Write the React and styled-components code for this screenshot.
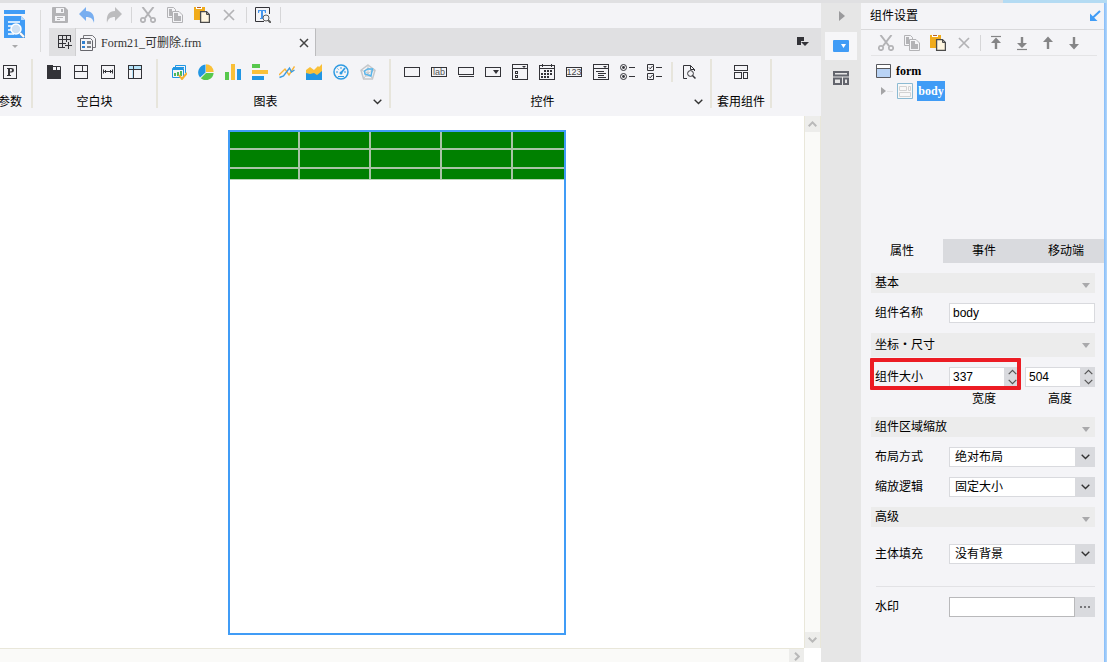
import React, { useState } from 'react';
import styled, { createGlobalStyle, css } from 'styled-components';

const Global = createGlobalStyle`
  *, *::before, *::after { box-sizing: border-box; }
  html, body, #root { height: 100%; }
  body {
    margin: 0;
    overflow: hidden;
    background: #f4f4f7;
    color: #000;
    font: 12px/20px "Liberation Sans", "Noto Sans CJK SC", sans-serif;
  }
  button, input, select { font: inherit; color: inherit; margin: 0; padding: 0; border: 0; border-radius: 0; background: none; outline: none; }
  svg { display: block; flex: none; }
`;

/* ---------- layout ---------- */
const Window = styled.div`display: flex; flex-direction: column; min-height: 100vh;`;
const TopEdge = styled.div`
  height: 3px;
  flex: none;
  display: flex;
  justify-content: flex-end;
  background: #e0e0e2;
  &::after { content: ''; width: 104px; background: #b4dbf3; }
`;
const Columns = styled.div`flex: 1; display: flex; min-height: 0;`;
const Workspace = styled.main`flex: 1; min-width: 0; display: flex; flex-direction: column;`;
const Header = styled.header`height: 53px; flex: none; display: flex;`;
const Brand = styled.button`
  width: 47px;
  display: flex;
  padding: 7px 0 0 4px;
  align-items: flex-start;
`;
const BrandLine = styled.span`width: 1px; height: 42px; margin: 0 0 0 15px; background: #dcdcdc;`;
const HeaderMain = styled.div`flex: 1; min-width: 0; display: flex; flex-direction: column;`;
const QuickBar = styled.div`height: 25px; display: flex; align-items: flex-start; padding-top: 4px;`;
const TabBar = styled.div`height: 28px; margin-left: 2px; display: flex; background: #e0e0e2;`;
const NewTab = styled.button`width: 27px; padding-left: 8px; display: flex; align-items: center; border-right: 1px solid #cfcfd1;`;
const FileTab = styled.div`
  width: 240px;
  display: flex;
  align-items: center;
  gap: 5px;
  padding: 0 6px 0 4px;
  background: #f4f4f7;
  border-top: 1px solid #dedee0;
  border-right: 1px solid #bcbcbe;
`;
const FileName = styled.span`
  flex: 1;
  color: #333;
  font-family: "Liberation Serif", "Noto Sans CJK SC", serif;
`;
const TabMenu = styled.button`margin-left: auto; width: 24px; display: flex; align-items: center;`;

const IconButton = styled.button`
  width: ${p => p.$w || 27}px;
  height: 16px;
  padding-left: 5px;
  flex: none;
`;
const Divider = styled.span`
  width: ${p => p.$w || 7}px;
  height: ${p => p.$h || 16}px;
  flex: none;
  display: flex;
  justify-content: center;
  &::before { content: ''; width: ${p => p.$line || 1}px; background: ${p => p.$color || '#d6d6d8'}; }
`;

const Ribbon = styled.div`height: 60px; flex: none; display: flex; padding: 3px 0 8px;`;
const Group = styled.section`
  width: ${p => p.$w}px;
  flex: none;
  display: flex;
  flex-direction: column;
  align-items: center;
  gap: 11px;
  padding: 5px ${p => p.$right || 0}px 0 0;
  border-right: 2px solid #e7e5dc;
`;
const GroupIcons = styled.div`display: flex; align-items: center; height: 16px;`;
const GroupLabel = styled.div`
  height: 22px;
  line-height: 22px;
  align-self: ${p => (p.$menu ? 'stretch' : 'center')};
  display: flex;
  align-items: center;
  white-space: nowrap;
  span { flex: 1; text-align: center; }
  button { width: 16px; flex: none; }
`;

/* ---------- canvas ---------- */
const Viewport = styled.div`
  flex: 1;
  min-height: 0;
  display: grid;
  grid-template-columns: 1fr 17px;
  grid-template-rows: 1fr 14px;
  background: #fff;
`;
const Canvas = styled.div`display: flex; justify-content: center; align-items: flex-start; padding: 14px 10px 0 0;`;
const FormFrame = styled.div`width: 338px; height: 505px; border: 2px solid #409cf6;`;
const Report = styled.table`
  width: 100%;
  table-layout: fixed;
  border-spacing: 0;
  border-bottom: 1px solid #b8d4b4;
  td { padding: 0; background: #008000; border: 0 solid #a9c4a6; border-width: 0 2px 2px 0; }
  td:last-child { border-right: 0; }
  tr:last-child td { border-bottom: 0; }
`;
const ReportRow = styled.tr`height: ${p => p.$h}px;`;
const Scroll = styled.div`
  display: flex;
  flex-direction: ${p => (p.$vertical ? 'column' : 'row')};
  justify-content: ${p => (p.$vertical ? 'space-between' : 'flex-end')};
  background: #fafaf8;
  border: 0 solid #e9e7da;
  border-width: ${p => (p.$vertical ? '0 1px' : '1px 0 0')};
  button {
    width: 15px;
    height: ${p => (p.$vertical ? 16 : 14)}px;
    background: #ededeb;
    display: flex;
    align-items: center;
    justify-content: center;
  }
`;

/* ---------- side strip ---------- */
const SideStrip = styled.nav`
  width: 40px;
  flex: none;
  display: flex;
  flex-direction: column;
  align-items: center;
  background: #e6e6e6;
`;
const StripButton = styled.button`
  width: 32px;
  height: ${p => p.$h}px;
  display: flex;
  align-items: center;
  justify-content: center;
  background: ${p => (p.$active ? '#f6f6f8' : 'transparent')};
`;

/* ---------- settings panel ---------- */
const Panel = styled.aside`
  width: 246px;
  flex: none;
  position: relative;
  display: flex;
  flex-direction: column;
  &::after {
    content: '';
    position: absolute;
    inset: 0 0 0 auto;
    width: 3px;
    background: linear-gradient(90deg, #85bcf8, #b4d7fb);
  }
`;
const PanelTitle = styled.h2`
  margin: 0;
  height: 27px;
  padding: 0 6px 0 9px;
  display: flex;
  align-items: center;
  justify-content: space-between;
  font-size: 12px;
  font-weight: 400;
  border-bottom: 1px solid #d9d9db;
`;
const PanelTools = styled.div`
  height: 26px;
  margin: 0 10px;
  padding-left: 2px;
  display: flex;
  align-items: center;
  border-bottom: 1px solid #e4e4e6;
`;
const Tree = styled.ul`height: 183px; margin: 0; padding: 5px 0 0; list-style: none;`;
const TreeItem = styled.li`
  height: 20px;
  display: flex;
  align-items: center;
  gap: 4px;
  padding-left: ${p => p.$indent}px;
  font: bold 12px/20px "Liberation Serif", serif;
`;
const Selected = styled.span`width: 28px; text-align: center; color: #fff; background: #409cf6;`;
const Tabs = styled.div`height: 24px; display: grid; grid-template-columns: repeat(3, 1fr); flex: none;`;
const Tab = styled.button`background: ${p => (p.$active ? '#f4f4f7' : '#d9dade')};`;
const Properties = styled.form`
  padding: 10px 12px 0 10px;
  display: flex;
  flex-direction: column;
  gap: 10px;
`;
const SectionHead = styled.button`
  height: ${p => p.$h || 20}px;
  padding: 0 5px 0 4px;
  display: flex;
  align-items: center;
  justify-content: space-between;
  background: #ececec;
  svg { margin-top: ${p => (p.$h ? 0 : 4)}px; }
`;
const Row = styled.div`
  height: 20px;
  display: flex;
  align-items: center;
  padding-left: 4px;
  margin-top: ${p => p.$top || 0}px;
`;
const Label = styled.label`width: 74px; flex: none;`;
const boxed = css`
  height: 20px;
  min-width: 0;
  flex: 1;
  background: #fff;
  border: 1px solid ${p => p.$line || '#d9dade'};
`;
const TextBox = styled.input`${boxed} padding-left: 3px;`;
const SelectBox = styled.div`
  flex: 1;
  display: grid;
  grid-template-columns: 1fr 20px;
  align-items: center;
  select { grid-area: 1 / 1 / 2 / 3; ${boxed} appearance: none; padding: 0 24px 0 5px; border-right: 20px solid #d9dade; line-height: 18px; }
  svg { grid-area: 1 / 2; justify-self: center; pointer-events: none; }
`;
const SizeRow = styled(Row)`position: relative;`;
const Highlight = styled.span`
  position: absolute;
  inset: -9px 74px -3px -1px;
  border: 4px solid #ec1c24;
  border-radius: 1px;
  pointer-events: none;
`;
const SizeFields = styled.div`flex: 1; display: grid; grid-template-columns: 1fr 1fr; gap: 6px;`;
const Stepper = styled.div`display: flex; height: 20px; min-width: 0;`;
const Arrows = styled.div`
  width: 14px;
  flex: none;
  display: flex;
  flex-direction: column;
  background: #d9dade;
  button { height: 10px; display: flex; align-items: center; justify-content: center; }
`;
const Captions = styled.div`
  height: 20px;
  margin-top: -10px;
  padding-left: 78px;
  display: grid;
  grid-template-columns: 1fr 1fr;
  gap: 6px;
  line-height: 24px;
  span { text-align: center; }
`;
const Rule = styled.hr`width: 219px; margin: 12px 0 0 auto; border: 0; border-top: 1px solid #e2e2e5;`;
const MoreButton = styled.button`
  width: 20px;
  height: 20px;
  display: flex;
  align-items: center;
  justify-content: center;
  background: #d9dade;
`;

/* ---------- icons ---------- */
const S = ({ w = 16, h = 16, children, ...r }) => (
  <svg width={w} height={h} viewBox={`0 0 ${w} ${h}`} fill="none" aria-hidden="true" {...r}>{children}</svg>
);
const D = '#333338';
const G = '#b3b3b6';
const Line = ({ children }) => <S><g stroke={D} strokeWidth="1" shapeRendering="crispEdges">{children}</g></S>;
const Chevron = ({ c = '#333', dir = 0, w = 9, sw = 1.4 }) => (
  <svg width={w} height="6" viewBox="0 0 9 6" fill="none" aria-hidden="true">
    <path d="M.7 .8 4.5 4.6 8.3 .8" stroke={c} strokeWidth={sw} transform={`rotate(${dir} 4.5 3)`} />
  </svg>
);
const Caret = ({ c = '#a9a9ab' }) => <S w={8} h={5}><path d="M0 0h8L4 5z" fill={c} /></S>;

const icons = {
  save: <S><path d="M0 1q0-1 1-1h12l3 3v12q0 1-1 1H1q-1 0-1-1z" fill={G} /><path d="M4 1h8v5H4zM3 9h10v5H3z" fill="#f4f4f7" /><path d="M9 2h2v3H9zM5 10h6v1H5zM5 12h3v1H5z" fill={G} /></S>,
  undo: <S><path d="M7 0v4c6 0 9 4 8 12-1-4-3-6-8-6v4L0 7z" fill="#78aef0" /></S>,
  redo: <S><path d="M9 0v4C3 4 0 8 1 16c1-4 3-6 8-6v4l7-7z" fill="#bcbcbe" /></S>,
  cut: <S><path d="M2.500 0 11 11M13.500 0 5 11" stroke={G} strokeWidth="2" /><circle cx="3" cy="13" r="2.200" stroke={G} strokeWidth="1.700" /><circle cx="13" cy="13" r="2.200" stroke={G} strokeWidth="1.700" /></S>,
  copy: <S><path d="M.5.5h6l2 2v8h-8z" stroke={G} /><path d="M2 2h3v3h2v4H2z" fill={G} /><path d="M5.500 4.500h6.500l3.500 3.500v7.500h-10z" fill="#f4f4f7" stroke={G} /><path d="M7 6h4v3h3v5H7z" fill={G} /></S>,
  paste: <S><path d="M0 0h11v13H0z" fill="#f0ab1b" /><path d="M2 0h6v2H2z" fill="#fff" /><path d="M3 0h4v1H3z" fill="#b5622c" /><path d="M6.600 4.600h5.900l2.900 2.900v7.900H6.600z" fill="#fff6e0" stroke="#4b4b4b" strokeWidth="1.300" /><path d="M12.500 4.500v3h3" stroke="#4b4b4b" /></S>,
  close: <S><path d="m3 3 10 10M13 3 3 13" stroke={G} strokeWidth="1.700" /></S>,
  find: <S><path d="M9 14.500H.5V.5h14V7" stroke={D} /><path d="M3 3h8v3h-1L9.500 4H8v7h1v1H5v-1h1V4H4.500L4 6H3z" fill="#4797ee" /><circle cx="11" cy="11" r="3" stroke="#606060" fill="#f4f4f7" /><path d="m13 13 3 3" stroke="#606060" strokeWidth="2" /></S>,
  param: <S><rect x="1.500" y="1.500" width="13" height="13" stroke={D} /><path d="M5 4h4.500q2.500 0 2.500 2.200T9.500 8.600H8V11h1v1H5v-1h1V5H5zM8 5v2.600h.8Q10 7.500 10 6.300T8.800 5z" fill={D} /></S>,
  block1: <S><path d="M1 1h6v5h8v9H1z" fill={D} /><path d="M7 2.500h7.500v3.500M10.500 2.500V6" stroke={D} /></S>,
  block2: <Line><path d="M1.500 1.500h13v13h-13zM1.500 7.500h13M9.500 1.500v6" /></Line>,
  block3: <S><rect x="1.500" y="1.500" width="13" height="13" stroke={D} /><path d="M3.500 5.500v4M12.500 5.500v4M4 7.500h8M6 6 4.500 7.500 6 9M10 6l1.500 1.500L10 9" stroke={D} /></S>,
  block4: <S><path d="M2 2h12v3H6v9H5V5H2z" fill="#b7e4fa" /><path d="M1.500 1.500h13v13h-13zM1.500 5.500h13M6.500 1.500v13" stroke={D} shapeRendering="crispEdges" /></S>,
  report: <S><path d="M4.500 3.500v-2h10V9M2 3.500h11" stroke="#2196e3" /><path d="M1.500 4.500h11v9h-11zM1 5.500h12" stroke="#2196e3" fill="#f4f4f7" /><path d="M3 9h2v3H3zM6 8h2v4H6zM9 7h2v5H9z" fill="#4bb85b" /><path d="m8 11 3 4 5-6" stroke="#f7b12c" strokeWidth="2" /></S>,
  pie: <S><path d="M7.500 8.500V.5a8 8 0 0 0-5.500 13z" fill="#2196e3" /><path d="M8 8V.3A7.700 7.700 0 0 1 15.700 8z" fill="#f9c038" /><path d="M8 9h7.600A7.700 7.700 0 0 1 2.800 14.200z" fill="#57c84d" /></S>,
  column: <S><path d="M0 8h4v8H0z" fill="#57c84d" /><path d="M6 0h4v16H6z" fill="#f9c038" /><path d="M12 5h4v11h-4z" fill="#2196e3" /></S>,
  bar: <S><path d="M0 0h8v4H0z" fill="#57c84d" /><path d="M0 6h16v4H0z" fill="#f9c038" /><path d="M0 12h12v4H0z" fill="#2196e3" /></S>,
  line: <S><path d="m0 11 6-6 4 6 5.500-8.500" stroke="#f9b53a" strokeWidth="1.400" /><path d="m.5 13.500 4-1.500L10.500 4l2 4L15.500 6" stroke="#3c9be0" strokeWidth="1.400" /></S>,
  area: <S><path d="m0 6 4-3 4 3 4-4 1 1 3-3v11H0z" fill="#f9c038" /><path d="m0 9 4 1 4-1 3 2 5-4v9H0z" fill="#2196e3" /></S>,
  gauge: <S><circle cx="8" cy="8" r="7" stroke="#2f9be2" strokeWidth="1.500" /><path d="M3 8h2M8 3v2M4.500 4.500l1 1M11 8h2M5 12.500h6" stroke="#2f9be2" /><path d="m8 9 4-5" stroke="#2f9be2" strokeWidth="1.800" /><circle cx="8" cy="9" r="1.500" fill="#2f9be2" /></S>,
  radar: <S><path d="m8 1 7 5.200-2.600 8.800H3.600L1 6.200z" stroke="#c5c8cb" strokeWidth="1.500" /><path d="m8 4 4 3-1.500 5h-5L4 7zM8 1v8M1 6l7 3 7-3M4 14l4-5 4 5" stroke="#c5c8cb" /><path d="M8 5h4.500l-1.500 7-6-2-.5-3z" stroke="#55b5ec" strokeWidth="1.400" /></S>,
  text: <Line><rect x=".5" y="3.500" width="15" height="9" /></Line>,
  label: <S><rect x=".5" y="3.500" width="15" height="9" stroke={D} /><text x="8" y="11" fontSize="9" textAnchor="middle" fill="#555" fontFamily="Liberation Sans">lab</text></S>,
  button: <Line><path d="M.5 3.500h15v7H.5zM1 12.500h15" /></Line>,
  combo: <S><rect x=".5" y="3.500" width="15" height="9" stroke={D} /><path d="M8 6h6l-3 4z" fill={D} /></S>,
  list: <S><path d="M.5.5h15v15H.5zM.5 4.500h15M3.500 7.500h2v2h-2zM3.500 11.500h2v2h-2z" stroke={D} shapeRendering="crispEdges" /><path d="M10 2h4l-2 2z" fill={D} /></S>,
  date: <S><path d="M.5 1.500h15v14H.5zM.5 4.500h15M3.500 0v3M12.500 0v3" stroke={D} shapeRendering="crispEdges" /><path d="M5 7h9M2 10h12M2 13h8" stroke={D} strokeWidth="2" strokeDasharray="2 1" shapeRendering="crispEdges" /></S>,
  number: <S><rect x=".5" y="3.500" width="15" height="9" stroke={D} /><text x="8" y="11" fontSize="9" textAnchor="middle" fill="#444" fontFamily="Liberation Sans">123</text></S>,
  tree: <S><path d="M.5.5h15v15H.5zM.5 4.500h15M3 7.500h8M5 9.500h8M5 11.500h6M5 13.500h8" stroke={D} shapeRendering="crispEdges" /><path d="M10 2h4l-2 2z" fill={D} /></S>,
  radio: <S><circle cx="3.500" cy="3.500" r="3" stroke={D} /><circle cx="3.500" cy="3.500" r="1.400" fill={D} /><circle cx="3.500" cy="12.500" r="3" stroke={D} /><circle cx="3.500" cy="12.500" r="1.400" fill={D} /><path d="M9 3.500h6M9 12.500h6" stroke={D} /></S>,
  check: <S><path d="M.5.5h6v6h-6zM.5 9.500h6v6h-6zM9 3.500h6M9 12.500h6" stroke={D} /><path d="m2 3.500 1.300 1.300L5.500 2M2 12.500l1.300 1.300L5.500 11" stroke={D} /></S>,
  preview: <S><path d="M6 14.500H2.500V1.500h7l4 4V7M9.500 1.500v4h4" stroke={D} /><circle cx="9.500" cy="9.500" r="2.900" stroke={D} /><path d="m11.500 11.500 3 3" stroke={D} strokeWidth="1.500" /></S>,
  widget: <Line><path d="M1.500 1.500h13v5h-13zM1.500 8.500h7v6h-7zM10.500 8.500h4v6h-4z" /></Line>,
  top: <S><path d="M3 1.500h10" stroke="#858587" strokeWidth="1.200" /><path d="M8 2.500 13 8H9.200v6H6.800V8H3z" fill="#858587" /></S>,
  bottom: <S><path d="M3 14.500h10" stroke="#858587" strokeWidth="1.200" /><path d="M8 13 3 8h3.800V2h2.400v6H13z" fill="#858587" /></S>,
  up: <S><path d="M8 1.500 13 7H9.200v7H6.800V7H3z" fill="#858587" /></S>,
  down: <S><path d="M8 14.500 3 9h3.800V2h2.400v7H13z" fill="#858587" /></S>,
};

const Tool = ({ name, title, w }) => (
  <IconButton type="button" aria-label={title || name} $w={w}>{icons[name]}</IconButton>
);

const groups = [
  { label: '参数', w: 33, right: 11, items: ['param'] },
  { label: '空白块', w: 125, items: ['block1', 'block2', 'block3', 'block4'] },
  { label: '图表', w: 233, menu: true, items: ['report', 'pie', 'column', 'bar', 'line', 'area', 'gauge', 'radar'] },
  { label: '控件', w: 321, menu: true, items: ['text', 'label', 'button', 'combo', 'list', 'date', 'number', 'tree', 'radio', 'check', '|', 'preview'] },
  { label: '套用组件', w: 60, items: ['widget'] },
];

const Choice = ({ id, label, value, top }) => (
  <Row $top={top}>
    <Label htmlFor={id}>{label}</Label>
    <SelectBox>
      <select id={id} defaultValue={value}><option>{value}</option></select>
      <Chevron />
    </SelectBox>
  </Row>
);

const SizeInput = ({ label, initial }) => {
  const [value, setValue] = useState(initial);
  return (
    <Stepper>
      <TextBox aria-label={label} value={value} onChange={e => setValue(Number(e.target.value) || 0)} />
      <Arrows>
        <button type="button" aria-label={`${label} +`} onClick={() => setValue(value + 1)}><Chevron dir={180} c="#555" sw={1.2} /></button>
        <button type="button" aria-label={`${label} -`} onClick={() => setValue(value - 1)}><Chevron c="#555" sw={1.2} /></button>
      </Arrows>
    </Stepper>
  );
};

export default function App() {
  return (
    <Window>
      <Global />
      <TopEdge />
      <Columns>
        <Workspace>
          <Header>
            <Brand type="button" aria-label="menu">
              <S w={21} h={40}>
                <path d="M0 0h21v4H0zM0 6h17l4 4v18H0z" fill="#409cf6" />
                <path d="M17 6v4h4z" fill="#b9dafb" />
                <path d="M4 12h12M4 16h5M4 20h4M4 24h6" stroke="#fff" strokeWidth="1.500" />
                <circle cx="12" cy="19" r="5" fill="#cfe0f2" stroke="#fff" strokeWidth="1.500" />
                <path d="m16 23 4 4" stroke="#7d94ad" strokeWidth="3" />
                <path d="m16 23 4 4" stroke="#fff" strokeWidth="2" />
                <path d="M8 35h6l-3 3z" fill="#a9a9ab" />
              </S>
              <BrandLine />
            </Brand>
            <HeaderMain>
              <QuickBar>
                <Tool name="save" /><Tool name="undo" /><Tool name="redo" />
                <Divider />
                <Tool name="cut" /><Tool name="copy" /><Tool name="paste" /><Tool name="close" />
                <Divider />
                <Tool name="find" />
                <Divider />
              </QuickBar>
              <TabBar>
                <NewTab type="button" aria-label="new">
                  <S><path d="M8 13.500H1.500V1.500h12V8M1.500 5.500h12M1.500 9.500h7M5.500 1.500v12M9.500 1.500v6M11.500 8v7M8 11.500h7" stroke={D} shapeRendering="crispEdges" /></S>
                </NewTab>
                <FileTab>
                  <S>
                    <path d="M3.500 3V.5h9l3 3v9H13" stroke="#77777c" />
                    <path d="M.5 3.500h10l2 2v10H.5z" fill="#f4f4f7" stroke="#66666c" />
                    <path d="M2 6h3v3H2zM2 11h3v2H2z" fill="#2f7fd0" />
                    <path d="M7 6h4v3H7zM7 11h4v2H7z" fill="#7f8288" />
                  </S>
                  <FileName>Form21_可删除.frm</FileName>
                  <button type="button" aria-label="close tab">
                    <S w={10} h={10}><path d="m1 1 8 8M9 1 1 9" stroke="#444" strokeWidth="1.500" /></S>
                  </button>
                </FileTab>
                <TabMenu type="button" aria-label="all tabs">
                  <S w={12} h={12}><path d="M0 1h7v4H4v4H0z" fill={D} /><path d="M4 6h8L8 10z" fill={D} /></S>
                </TabMenu>
              </TabBar>
            </HeaderMain>
          </Header>
          <Ribbon>
            {groups.map(g => (
              <Group key={g.label} $w={g.w} $right={g.right}>
                <GroupIcons>
                  {g.items.map((n, i) => n === '|'
                    ? <Divider key={i} $line={2} $h={20} $color="#e7e5dc" />
                    : <Tool key={n} name={n} />)}
                </GroupIcons>
                <GroupLabel $menu={g.menu}>
                  <span>{g.label}</span>
                  {g.menu && <button type="button" aria-label="more"><Chevron /></button>}
                </GroupLabel>
              </Group>
            ))}
          </Ribbon>
          <Viewport>
            <Canvas>
              <FormFrame>
                <Report>
                  <colgroup><col width="70" /><col width="71" /><col width="71" /><col width="71" /><col /></colgroup>
                  <tbody>
                    {[18, 19, 10].map(h => (
                      <ReportRow key={h} $h={h}>{[0, 1, 2, 3, 4].map(c => <td key={c} />)}</ReportRow>
                    ))}
                  </tbody>
                </Report>
              </FormFrame>
            </Canvas>
            <Scroll $vertical>
              <button type="button" aria-label="up"><Chevron dir={180} c="#b9b9b9" sw={2} /></button>
              <button type="button" aria-label="down"><Chevron c="#b9b9b9" sw={2} /></button>
            </Scroll>
            <Scroll>
              <button type="button" aria-label="right"><S w={6} h={9}><path d="M1 .7 4.800 4.500 1 8.300" stroke="#b9b9b9" strokeWidth="2" /></S></button>
            </Scroll>
          </Viewport>
        </Workspace>

        <SideStrip>
          <StripButton type="button" aria-label="collapse" $h={29}>
            <S w={7} h={16}><path d="M1 1 7 6 1 11z" fill="#9a9a9c" /></S>
          </StripButton>
          <StripButton type="button" aria-label="settings" $h={28} $active>
            <S w={16} h={12}><rect width="16" height="12" rx="1" fill="#409cf6" /><path d="M8 4h5l-2.500 4z" fill="#fff" /></S>
          </StripButton>
          <StripButton type="button" aria-label="library" $h={36}>
            <S w={16} h={14}><path d="M1 1h14v3.500H1zM1 7.500h7V13H1zM11 7.500h4V13h-4z" stroke="#63656d" strokeWidth="2" /></S>
          </StripButton>
        </SideStrip>

        <Panel>
          <PanelTitle>
            组件设置
            <S w={12} h={12}><path d="M11 1 4 7.500" stroke="#409cf6" strokeWidth="2" /><path d="M1 3.500 8.500 11H1z" fill="#409cf6" /></S>
          </PanelTitle>
          <PanelTools>
            <Tool name="cut" w={26} /><Tool name="copy" w={26} /><Tool name="paste" w={26} /><Tool name="close" w={26} />
            <Divider $w={6} />
            <Tool name="top" w={26} /><Tool name="bottom" w={26} /><Tool name="up" w={26} /><Tool name="down" w={26} />
          </PanelTools>
          <Tree>
            <TreeItem $indent={15}>
              <S><path d="M.5 1.500h14v13H.5z" fill="#b9d3f5" stroke="#58595e" /><path d="M1 2h13v3H1z" fill="#fff" /><path d="M1 5.500h13" stroke="#58595e" /></S>
              form
            </TreeItem>
            <TreeItem $indent={20}>
              <S w={12} h={10}><path d="M0 1v8l5-4z" fill="#a4a4a6" /><path d="M6 5.500h6" stroke="#e3e3e5" /></S>
              <S><path d="M.5.5h15v15H.5z" fill="#f8f8f8" stroke="#8cbbd3" /><path d="M2.500 3.500h7v4h-7zM11.500 3.500h2v4h-2zM2.500 9.500h11v4h-11z" stroke="#d3d3d3" /></S>
              <Selected>body</Selected>
            </TreeItem>
          </Tree>
          <Tabs role="tablist">
            <Tab type="button" role="tab" aria-selected="true" $active>属性</Tab>
            <Tab type="button" role="tab">事件</Tab>
            <Tab type="button" role="tab">移动端</Tab>
          </Tabs>
          <Properties onSubmit={e => e.preventDefault()}>
            <SectionHead type="button">基本<Caret /></SectionHead>
            <Row>
              <Label htmlFor="name">组件名称</Label>
              <TextBox id="name" defaultValue="body" />
            </Row>
            <SectionHead type="button" $h={24}>坐标・尺寸<Caret /></SectionHead>
            <SizeRow>
              <Label as="span">组件大小</Label>
              <SizeFields>
                <SizeInput label="宽度" initial={337} />
                <SizeInput label="高度" initial={504} />
              </SizeFields>
              <Highlight />
            </SizeRow>
            <Captions><span>宽度</span><span>高度</span></Captions>
            <SectionHead type="button">组件区域缩放<Caret /></SectionHead>
            <Choice id="layout" label="布局方式" value="绝对布局" />
            <Choice id="scale" label="缩放逻辑" value="固定大小" />
            <SectionHead type="button">高级<Caret /></SectionHead>
            <Choice id="fill" label="主体填充" value="没有背景" top={7} />
            <Rule />
            <Row>
              <Label htmlFor="mark">水印</Label>
              <TextBox id="mark" $line="#b9b9bb" />
              <MoreButton type="button" aria-label="edit">
                <S w={10} h={2}><path d="M0 0h2v2H0zM4 0h2v2H4zM8 0h2v2H8z" fill="#77777a" /></S>
              </MoreButton>
            </Row>
          </Properties>
        </Panel>
      </Columns>
    </Window>
  );
}
